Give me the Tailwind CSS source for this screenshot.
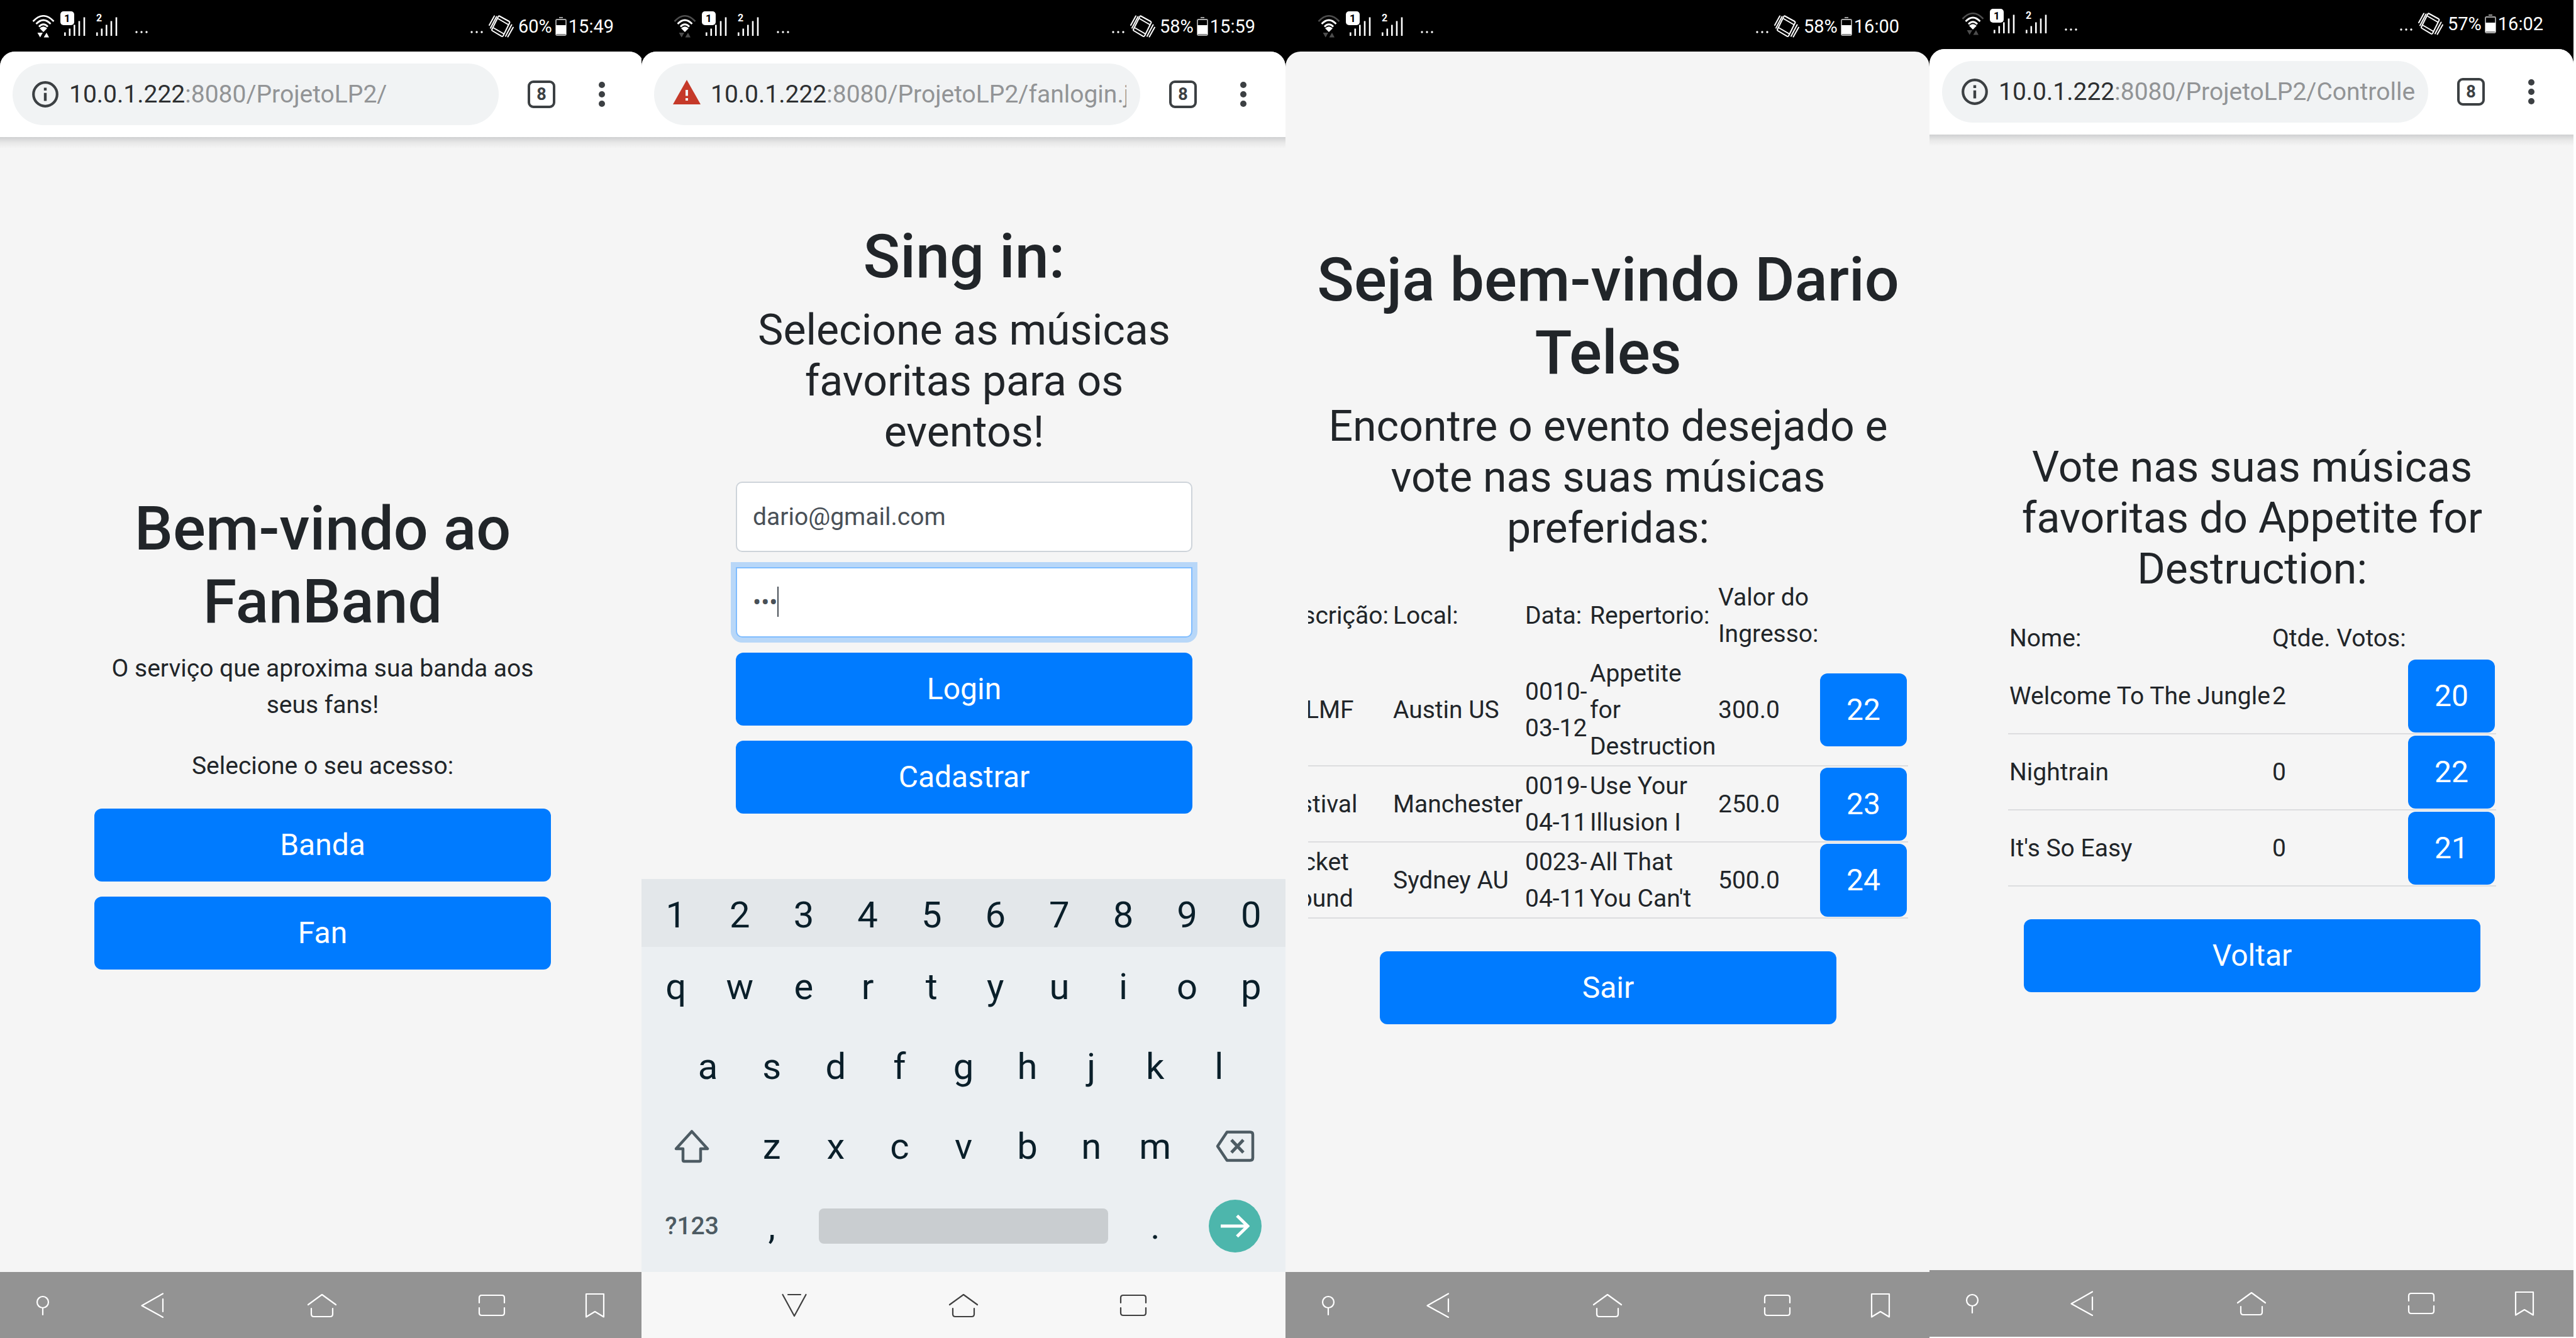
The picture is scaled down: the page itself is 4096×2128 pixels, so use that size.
<!DOCTYPE html>
<html lang="pt-BR">
<head>
<meta charset="utf-8">
<meta name="viewport" content="width=device-width, initial-scale=1">
<title>FanBand</title>
<script src="https://cdn.jsdelivr.net/npm/@tailwindcss/browser@4"></script>
</head>
<body class="bg-white font-[Roboto,sans-serif] text-[39px] leading-[58px] text-[#212529]">

<!-- Shared icons -->
<svg class="hidden" aria-hidden="true">
  <symbol id="wifi" viewBox="0 0 36 36">
    <path class="opacity-(--dim)" d="M1.500 10Q18-7.500 34.500 10" fill="none" stroke="#fff" stroke-width="2.600"/>
    <path d="M6.500 14Q18 2 29.500 14M11 18.500Q18 11 25 18.500" fill="none" stroke="#fff" stroke-width="2.800"/>
    <path d="M12 21Q18 15.500 24 21L18 27Z" fill="#fff"/>
    <path class="opacity-(--dim)" d="M8.500 28H17L12.800 35.500ZM18.500 35.500H27L23 28Z" fill="#fff"/>
  </symbol>
  <symbol id="bars" viewBox="0 0 34 30">
    <path d="M1.300 24.500V30M8.800 18.500V30M16.300 12.500V30M24 6.500V30M32 .5V30" stroke="#fff" stroke-width="2.600"/>
  </symbol>
  <symbol id="dots" viewBox="0 0 22 6">
    <circle cx="3" cy="3" r="1.700" fill="#fff"/><circle cx="11" cy="3" r="1.700" fill="#fff"/><circle cx="19" cy="3" r="1.700" fill="#fff"/>
  </symbol>
  <symbol id="vibrate" viewBox="0 0 40 36">
    <g fill="none" stroke="#fff" stroke-width="2" stroke-linejoin="round" stroke-linecap="round">
      <path d="M17 1.500L32.500 10Q34 11 33.200 12.500L23 33Q22 34.500 20.500 33.700L6 25Q4.500 24 5.300 22.500L15.500 2Q16 1 17 1.500Z"/>
      <path d="M15.500 6L31 15M8 20.500L23.500 29.500"/>
      <path d="M1 16L9 1.500M3 20.500L12.500 2.500M27 33.500L36.500 15.500M30.500 34.500L39 19.500"/>
    </g>
  </symbol>
  <symbol id="battery" viewBox="0 0 18 30">
    <path d="M6 0H12V2H6Z" fill="#999"/>
    <rect x="1" y="4" width="16" height="25" rx="1.500" fill="#000" stroke="#aaa" stroke-width="1.800"/>
    <path d="M1 13H17V27.500H1Z" fill="#fff"/>
  </symbol>
  <symbol id="info" viewBox="0 0 42 42">
    <circle cx="21" cy="21" r="18.800" fill="none" stroke="#3c4043" stroke-width="4.200"/>
    <path d="M21 10.500V15M21 18.800V31.500" stroke="#3c4043" stroke-width="4.400"/>
  </symbol>
  <symbol id="warn" viewBox="0 0 44 40">
    <path d="M22 0L44 39H0Z" fill="#c53929"/>
    <path d="M22 16V25.500M22 29V33" stroke="#f1f3f4" stroke-width="4"/>
  </symbol>
  <symbol id="more" viewBox="0 0 10 42">
    <circle cx="5" cy="6" r="5" fill="#3c4043"/><circle cx="5" cy="21" r="5" fill="#3c4043"/><circle cx="5" cy="36" r="5" fill="#3c4043"/>
  </symbol>
  <symbol id="pin" viewBox="0 0 24 40">
    <g fill="none" stroke="currentColor" stroke-width="2.200" stroke-linecap="round"><circle cx="12" cy="15" r="9"/><path d="M12 25V35"/></g>
  </symbol>
  <symbol id="back" viewBox="0 0 38 40">
    <path d="M35 1.500L1.500 20.500L35 39M35 10V30" fill="none" stroke="currentColor" stroke-width="2.200" stroke-linecap="round" stroke-linejoin="round"/>
  </symbol>
  <symbol id="hide" viewBox="0 0 40 40">
    <path d="M1.500 3L20 37L38.500 3M10 3H30" fill="none" stroke="currentColor" stroke-width="2.200" stroke-linecap="round" stroke-linejoin="round"/>
  </symbol>
  <symbol id="home" viewBox="0 0 48 40">
    <path d="M2 19L24 3L46 19M7 25V34Q7 38 11 38H37Q41 38 41 34V25" fill="none" stroke="currentColor" stroke-width="2.200" stroke-linecap="round" stroke-linejoin="round"/>
  </symbol>
  <symbol id="recent" viewBox="0 0 44 40">
    <path d="M2 16V8Q2 4 6 4H38Q42 4 42 8V16M2 24V32Q2 36 6 36H38Q42 36 42 32V24" fill="none" stroke="currentColor" stroke-width="2.200" stroke-linecap="round"/>
  </symbol>
  <symbol id="mark" viewBox="0 0 32 40">
    <path d="M2 2H30V38.500L16 30L2 38.500Z" fill="none" stroke="currentColor" stroke-width="2.200" stroke-linejoin="round"/>
  </symbol>
</svg>

<main class="grid min-h-screen grid-cols-[1020fr_1024fr_1024fr_1024fr_4fr] [&>section]:min-w-0">

  <!-- Home -->
  <section class="-mr-1 flex flex-col bg-black">
    <header class="flex h-[82px] items-end justify-between pr-[48px] pl-[51px] text-[29px] leading-[36px] text-white [--dim:1]">
      <div class="flex h-[80px] items-center">
        <svg class="h-[36px] w-[36px]"><use href="#wifi"/></svg>
        <span class="relative ml-[15px]"><svg class="h-[30px] w-[34px]"><use href="#bars"/></svg><b class="absolute -top-[9px] -left-[6px] h-[22px] w-[22px] rounded-[5px] bg-white text-center text-[17px] leading-[22px] text-black">1</b></span>
        <span class="relative ml-[17px]"><svg class="h-[30px] w-[34px]"><use href="#bars"/></svg><b class="absolute -top-[9px] left-0 text-[16px] leading-[22px]">2</b></span>
        <svg class="mt-[18px] ml-[27px] h-[6px] w-[22px]"><use href="#dots"/></svg>
      </div>
      <div class="flex h-[80px] items-center">
        <svg class="mt-[18px] h-[6px] w-[22px]"><use href="#dots"/></svg>
        <svg class="mr-[7px] ml-[8px] h-[36px] w-[40px]"><use href="#vibrate"/></svg>
        <span>60%</span>
        <svg class="mr-[3px] ml-[5px] h-[30px] w-[18px]"><use href="#battery"/></svg>
        <time>15:49</time>
      </div>
    </header>
    <div class="flex flex-1 flex-col overflow-hidden rounded-t-[24px] bg-[#f5f5f5]">
      <div class="flex h-[136px] shrink-0 items-center bg-white pl-[20px]">
        <div class="flex h-[98px] w-[773px] items-center gap-[17px] rounded-full bg-[#f1f3f4] pr-[24px] pl-[31px]">
          <svg class="h-[42px] w-[42px] shrink-0"><use href="#info"/></svg>
          <a href="#" class="overflow-hidden whitespace-nowrap text-[#929496]"><span class="text-[#2d2f31]">10.0.1.222</span>:8080/ProjetoLP2/</a>
        </div>
        <button class="ml-[46px] h-[44px] w-[44px] rounded-[9px] border-[4px] border-[#3c4043] text-center text-[27px] leading-[36px] font-bold text-[#3c4043]">8</button>
        <button aria-label="Menu" class="ml-[69px]"><svg class="h-[42px] w-[10px]"><use href="#more"/></svg></button>
      </div>
      <div class="h-[18px] bg-linear-to-b from-[#cfd0d1] via-[#e8e8e8] to-[#f5f5f5]"></div>
      <div class="flex-1 pt-[547px] pr-[148px] pl-[150px] text-center">
        <h1 class="mb-[19px] text-[97px] leading-[116px] font-medium">Bem-vindo ao FanBand</h1>
        <p class="mb-[39px]">O serviço que aproxima sua banda aos seus fans!</p>
        <p class="mb-[39px]">Selecione o seu acesso:</p>
        <div class="flex flex-col gap-[24px]">
          <button class="h-[116px] rounded-[12px] bg-[#007bff] text-[48px] text-white">Banda</button>
          <button class="h-[116px] rounded-[12px] bg-[#007bff] text-[48px] text-white">Fan</button>
        </div>
      </div>
    </div>
    <nav class="grid h-[105px] grid-cols-[136fr_214fr_324fr_216fr_112fr_22fr] place-items-center bg-[#939393] text-white">
      <button aria-label="Fixar"><svg class="h-[40px] w-[24px]"><use href="#pin"/></svg></button>
      <button aria-label="Voltar"><svg class="h-[40px] w-[38px]"><use href="#back"/></svg></button>
      <button aria-label="Início"><svg class="h-[40px] w-[48px]"><use href="#home"/></svg></button>
      <button aria-label="Recentes"><svg class="h-[40px] w-[44px]"><use href="#recent"/></svg></button>
      <button aria-label="Marcador"><svg class="h-[40px] w-[32px]"><use href="#mark"/></svg></button>
    </nav>
  </section>

  <!-- Sign in -->
  <section class="flex flex-col bg-black">
    <header class="flex h-[82px] items-end justify-between pr-[48px] pl-[51px] text-[29px] leading-[36px] text-white [--dim:0.3]">
      <div class="flex h-[80px] items-center">
        <svg class="h-[36px] w-[36px]"><use href="#wifi"/></svg>
        <span class="relative ml-[15px]"><svg class="h-[30px] w-[34px]"><use href="#bars"/></svg><b class="absolute -top-[9px] -left-[6px] h-[22px] w-[22px] rounded-[5px] bg-white text-center text-[17px] leading-[22px] text-black">1</b></span>
        <span class="relative ml-[17px]"><svg class="h-[30px] w-[34px]"><use href="#bars"/></svg><b class="absolute -top-[9px] left-0 text-[16px] leading-[22px]">2</b></span>
        <svg class="mt-[18px] ml-[27px] h-[6px] w-[22px]"><use href="#dots"/></svg>
      </div>
      <div class="flex h-[80px] items-center">
        <svg class="mt-[18px] h-[6px] w-[22px]"><use href="#dots"/></svg>
        <svg class="mr-[7px] ml-[8px] h-[36px] w-[40px]"><use href="#vibrate"/></svg>
        <span>58%</span>
        <svg class="mr-[3px] ml-[5px] h-[30px] w-[18px]"><use href="#battery"/></svg>
        <time>15:59</time>
      </div>
    </header>
    <div class="flex flex-1 flex-col overflow-hidden rounded-t-[24px] bg-[#f5f5f5]">
      <div class="flex h-[136px] shrink-0 items-center bg-white pl-[20px]">
        <div class="flex h-[98px] w-[773px] items-center gap-[16px] rounded-full bg-[#f1f3f4] pr-[22px] pl-[30px]">
          <svg class="mb-[6px] h-[40px] w-[44px] shrink-0"><use href="#warn"/></svg>
          <a href="#" class="overflow-hidden whitespace-nowrap text-[#929496]"><span class="text-[#2d2f31]">10.0.1.222</span>:8080/ProjetoLP2/fanlogin.j</a>
        </div>
        <button class="ml-[46px] h-[44px] w-[44px] rounded-[9px] border-[4px] border-[#3c4043] text-center text-[27px] leading-[36px] font-bold text-[#3c4043]">8</button>
        <button aria-label="Menu" class="ml-[69px]"><svg class="h-[42px] w-[10px]"><use href="#more"/></svg></button>
      </div>
      <div class="h-[18px] shrink-0 bg-linear-to-b from-[#cfd0d1] via-[#e8e8e8] to-[#f5f5f5]"></div>
      <form class="flex-1 pt-[114px] pr-[148px] pl-[150px] text-center">
        <h1 class="mb-[19px] text-[97px] leading-[116px] font-medium">Sing in:</h1>
        <h3 class="mb-[38px] text-[68px] leading-[81px]">Selecione as músicas favoritas para os eventos!</h3>
        <div class="flex flex-col gap-[24px]">
          <input type="email" aria-label="Email" value="dario@gmail.com" class="h-[112px] rounded-[10px] border-2 border-[#ced4da] bg-white px-[25px] text-[#495057]">
          <div class="relative flex">
            <input type="password" aria-label="Senha" value="123" class="h-[112px] w-full rounded-b-[10px] border-2 border-[#80bdff] bg-white px-[25px] text-[#495057] ring-8 ring-[#007bff]/25">
            <span class="absolute top-[31px] left-[66px] h-[48px] w-[2px] bg-[#495057]"></span>
          </div>
          <button type="button" class="h-[116px] rounded-[12px] bg-[#007bff] text-[48px] text-white">Login</button>
          <button type="button" class="h-[116px] rounded-[12px] bg-[#007bff] text-[48px] text-white">Cadastrar</button>
        </div>
      </form>
      <!-- On-screen keyboard -->
      <div class="flex h-[625px] shrink-0 flex-col bg-[#ebeff2] text-[58px] leading-[68px] text-[#0a1f2a]">
        <div class="grid h-[108px] grid-cols-10 items-center bg-[#e3e7ea] px-1 pt-[6px]">
          <button>1</button><button>2</button><button>3</button><button>4</button><button>5</button><button>6</button><button>7</button><button>8</button><button>9</button><button>0</button>
        </div>
        <div class="grid flex-1 grid-cols-20 grid-rows-4 items-center px-1 pb-[10px] [&>button]:col-span-2">
          <button>q</button><button>w</button><button>e</button><button>r</button><button>t</button><button>y</button><button>u</button><button>i</button><button>o</button><button>p</button>
          <span></span><button>a</button><button>s</button><button>d</button><button>f</button><button>g</button><button>h</button><button>j</button><button>k</button><button>l</button><span></span>
          <div class="col-span-3 flex justify-center"><button aria-label="Shift"><svg class="h-[54px] w-[56px]" viewBox="0 0 56 54" fill="none" stroke="#4d5b63" stroke-width="4.500" stroke-linejoin="round"><path d="M28 3.500L53 31H42V49Q42 51 40 51H16Q14 51 14 49V31H3Z"/></svg></button></div>
          <button>z</button><button>x</button><button>c</button><button>v</button><button>b</button><button>n</button><button>m</button>
          <div class="col-span-3 flex justify-center"><button aria-label="Apagar"><svg class="h-[50px] w-[62px]" viewBox="0 0 62 50" fill="none" stroke="#4d5b63" stroke-width="4.500" stroke-linejoin="round"><path d="M18 2.500H55Q59 2.500 59 6.500V43.500Q59 47.500 55 47.500H18L3 25Z"/><path d="M25 15L44 35M44 15L25 35" stroke-width="5"/></svg></button></div>
          <div class="col-span-3 text-center text-[39px] font-medium text-[#4d5b63]"><button>?123</button></div>
          <button>,</button>
          <div class="col-span-10 flex px-[24px]"><button aria-label="Espaço" class="h-[56px] flex-1 rounded-[8px] bg-[#c9cdd0]"></button></div>
          <button>.</button>
          <div class="col-span-3 flex justify-center"><button aria-label="Ir" class="flex h-[84px] w-[84px] items-center justify-center rounded-full bg-[#4db6ac]"><svg class="h-[40px] w-[46px]" viewBox="0 0 46 40" fill="none" stroke="#fff" stroke-width="5"><path d="M0 20H42M26 3.500L43 20L26 36.500"/></svg></button></div>
        </div>
      </div>
    </div>
    <nav class="grid h-[105px] grid-cols-[136fr_214fr_324fr_216fr_112fr_22fr] place-items-center bg-[#f7f7f7] text-[#404040]">
      <button aria-label="Ocultar teclado" class="col-start-2"><svg class="h-[40px] w-[40px]"><use href="#hide"/></svg></button>
      <button aria-label="Início"><svg class="h-[40px] w-[48px]"><use href="#home"/></svg></button>
      <button aria-label="Recentes"><svg class="h-[40px] w-[44px]"><use href="#recent"/></svg></button>
    </nav>
  </section>

  <!-- Events -->
  <section class="flex flex-col bg-black">
    <header class="flex h-[82px] items-end justify-between pr-[48px] pl-[51px] text-[29px] leading-[36px] text-white [--dim:0.3]">
      <div class="flex h-[80px] items-center">
        <svg class="h-[36px] w-[36px]"><use href="#wifi"/></svg>
        <span class="relative ml-[15px]"><svg class="h-[30px] w-[34px]"><use href="#bars"/></svg><b class="absolute -top-[9px] -left-[6px] h-[22px] w-[22px] rounded-[5px] bg-white text-center text-[17px] leading-[22px] text-black">1</b></span>
        <span class="relative ml-[17px]"><svg class="h-[30px] w-[34px]"><use href="#bars"/></svg><b class="absolute -top-[9px] left-0 text-[16px] leading-[22px]">2</b></span>
        <svg class="mt-[18px] ml-[27px] h-[6px] w-[22px]"><use href="#dots"/></svg>
      </div>
      <div class="flex h-[80px] items-center">
        <svg class="mt-[18px] h-[6px] w-[22px]"><use href="#dots"/></svg>
        <svg class="mr-[7px] ml-[8px] h-[36px] w-[40px]"><use href="#vibrate"/></svg>
        <span>58%</span>
        <svg class="mr-[3px] ml-[5px] h-[30px] w-[18px]"><use href="#battery"/></svg>
        <time>16:00</time>
      </div>
    </header>
    <div class="flex flex-1 flex-col overflow-hidden rounded-t-[24px] bg-[#f5f5f5] pt-[305px] pr-[34px] pl-[36px] text-center">
      <h1 class="mb-[19px] text-[97px] leading-[116px] font-medium">Seja bem-vindo Dario Teles</h1>
      <h3 class="mb-[38px] text-[68px] leading-[81px]">Encontre o evento desejado e vote nas suas músicas preferidas:</h3>
      <div class="flex justify-end overflow-hidden">
        <table class="w-[1011px] shrink-0 table-fixed border-separate border-spacing-0 text-left [&_td]:border-b-2 [&_td]:border-[#dcdddf] [&_td]:px-[2px] [&_td]:pt-[2px] [&_td]:pb-px [&_th]:px-[2px] [&_th]:pt-[2px] [&_th]:pb-[3px] [&_th]:font-normal">
          <colgroup><col class="w-[190px]"><col class="w-[210px]"><col class="w-[103px]"><col class="w-[204px]"><col class="w-[162px]"><col class="w-[142px]"></colgroup>
          <thead><tr><th>Descrição:</th><th>Local:</th><th>Data:</th><th>Repertorio:</th><th>Valor do Ingresso:</th><th></th></tr></thead>
          <tbody>
            <tr><td><span class="pl-[51px]">LMF</span></td><td>Austin US</td><td>0010-03-12</td><td>Appetite for Destruction</td><td>300.0</td><td><button class="block h-[116px] w-full rounded-[12px] bg-[#007bff] text-center text-[48px] text-white">22</button></td></tr>
            <tr><td>Festival</td><td>Manchester</td><td>0019-04-11</td><td>Use Your Illusion I</td><td>250.0</td><td><button class="block h-[116px] w-full rounded-[12px] bg-[#007bff] text-center text-[48px] text-white">23</button></td></tr>
            <tr><td>Pocket<br>Ground</td><td>Sydney AU</td><td>0023-04-11</td><td>All That<br>You Can't</td><td>500.0</td><td><button class="block h-[116px] w-full rounded-[12px] bg-[#007bff] text-center text-[48px] text-white">24</button></td></tr>
          </tbody>
        </table>
      </div>
      <button class="mx-[114px] mt-[52px] h-[116px] shrink-0 rounded-[12px] bg-[#007bff] text-[48px] text-white">Sair</button>
    </div>
    <nav class="grid h-[105px] grid-cols-[136fr_214fr_324fr_216fr_112fr_22fr] place-items-center bg-[#939393] text-white">
      <button aria-label="Fixar"><svg class="h-[40px] w-[24px]"><use href="#pin"/></svg></button>
      <button aria-label="Voltar"><svg class="h-[40px] w-[38px]"><use href="#back"/></svg></button>
      <button aria-label="Início"><svg class="h-[40px] w-[48px]"><use href="#home"/></svg></button>
      <button aria-label="Recentes"><svg class="h-[40px] w-[44px]"><use href="#recent"/></svg></button>
      <button aria-label="Marcador"><svg class="h-[40px] w-[32px]"><use href="#mark"/></svg></button>
    </nav>
  </section>

  <!-- Voting -->
  <section class="mb-[2px] flex flex-col bg-black">
    <header class="flex h-[78px] items-end justify-between pr-[48px] pl-[51px] text-[29px] leading-[36px] text-white [--dim:0.3]">
      <div class="flex h-[80px] items-center">
        <svg class="h-[36px] w-[36px]"><use href="#wifi"/></svg>
        <span class="relative ml-[15px]"><svg class="h-[30px] w-[34px]"><use href="#bars"/></svg><b class="absolute -top-[9px] -left-[6px] h-[22px] w-[22px] rounded-[5px] bg-white text-center text-[17px] leading-[22px] text-black">1</b></span>
        <span class="relative ml-[17px]"><svg class="h-[30px] w-[34px]"><use href="#bars"/></svg><b class="absolute -top-[9px] left-0 text-[16px] leading-[22px]">2</b></span>
        <svg class="mt-[18px] ml-[27px] h-[6px] w-[22px]"><use href="#dots"/></svg>
      </div>
      <div class="flex h-[80px] items-center">
        <svg class="mt-[18px] h-[6px] w-[22px]"><use href="#dots"/></svg>
        <svg class="mr-[7px] ml-[8px] h-[36px] w-[40px]"><use href="#vibrate"/></svg>
        <span>57%</span>
        <svg class="mr-[3px] ml-[5px] h-[30px] w-[18px]"><use href="#battery"/></svg>
        <time>16:02</time>
      </div>
    </header>
    <div class="flex flex-1 flex-col overflow-hidden rounded-t-[24px] bg-[#f5f5f5]">
      <div class="flex h-[136px] shrink-0 items-center bg-white pl-[20px]">
        <div class="flex h-[98px] w-[773px] items-center gap-[17px] rounded-full bg-[#f1f3f4] pr-[20px] pl-[31px]">
          <svg class="h-[42px] w-[42px] shrink-0"><use href="#info"/></svg>
          <a href="#" class="overflow-hidden whitespace-nowrap text-[#929496]"><span class="text-[#2d2f31]">10.0.1.222</span>:8080/ProjetoLP2/Controlle</a>
        </div>
        <button class="ml-[46px] h-[44px] w-[44px] rounded-[9px] border-[4px] border-[#3c4043] text-center text-[27px] leading-[36px] font-bold text-[#3c4043]">8</button>
        <button aria-label="Menu" class="ml-[69px]"><svg class="h-[42px] w-[10px]"><use href="#more"/></svg></button>
      </div>
      <div class="h-[18px] bg-linear-to-b from-[#cfd0d1] via-[#e8e8e8] to-[#f5f5f5]"></div>
      <div class="flex flex-1 flex-col pt-[471px] pr-[123px] pl-[125px] text-center">
        <h3 class="mb-[38px] text-[68px] leading-[81px]">Vote nas suas músicas favoritas do Appetite for Destruction:</h3>
        <table class="w-full table-fixed border-separate border-spacing-0 text-left whitespace-nowrap [&_td]:border-b-2 [&_td]:border-[#dcdddf] [&_td]:px-[2px] [&_td]:pt-[2px] [&_td]:pb-px [&_th]:px-[2px] [&_th]:pt-[2px] [&_th]:pb-[3px] [&_th]:font-normal">
          <colgroup><col><col class="w-[216px]"><col class="w-[142px]"></colgroup>
          <thead><tr><th>Nome:</th><th>Qtde. Votos:</th><th></th></tr></thead>
          <tbody>
            <tr><td>Welcome To The Jungle</td><td>2</td><td><button class="block h-[116px] w-full rounded-[12px] bg-[#007bff] text-center text-[48px] text-white">20</button></td></tr>
            <tr><td>Nightrain</td><td>0</td><td><button class="block h-[116px] w-full rounded-[12px] bg-[#007bff] text-center text-[48px] text-white">22</button></td></tr>
            <tr><td>It's So Easy</td><td>0</td><td><button class="block h-[116px] w-full rounded-[12px] bg-[#007bff] text-center text-[48px] text-white">21</button></td></tr>
          </tbody>
        </table>
        <button class="mx-[25px] mt-[52px] h-[116px] rounded-[12px] bg-[#007bff] text-[48px] text-white">Voltar</button>
      </div>
    </div>
    <nav class="grid h-[106px] grid-cols-[136fr_214fr_324fr_216fr_112fr_22fr] place-items-center bg-[#939393] text-white">
      <button aria-label="Fixar"><svg class="h-[40px] w-[24px]"><use href="#pin"/></svg></button>
      <button aria-label="Voltar"><svg class="h-[40px] w-[38px]"><use href="#back"/></svg></button>
      <button aria-label="Início"><svg class="h-[40px] w-[48px]"><use href="#home"/></svg></button>
      <button aria-label="Recentes"><svg class="h-[40px] w-[44px]"><use href="#recent"/></svg></button>
      <button aria-label="Marcador"><svg class="h-[40px] w-[32px]"><use href="#mark"/></svg></button>
    </nav>
  </section>
</main>
</body>
</html>
